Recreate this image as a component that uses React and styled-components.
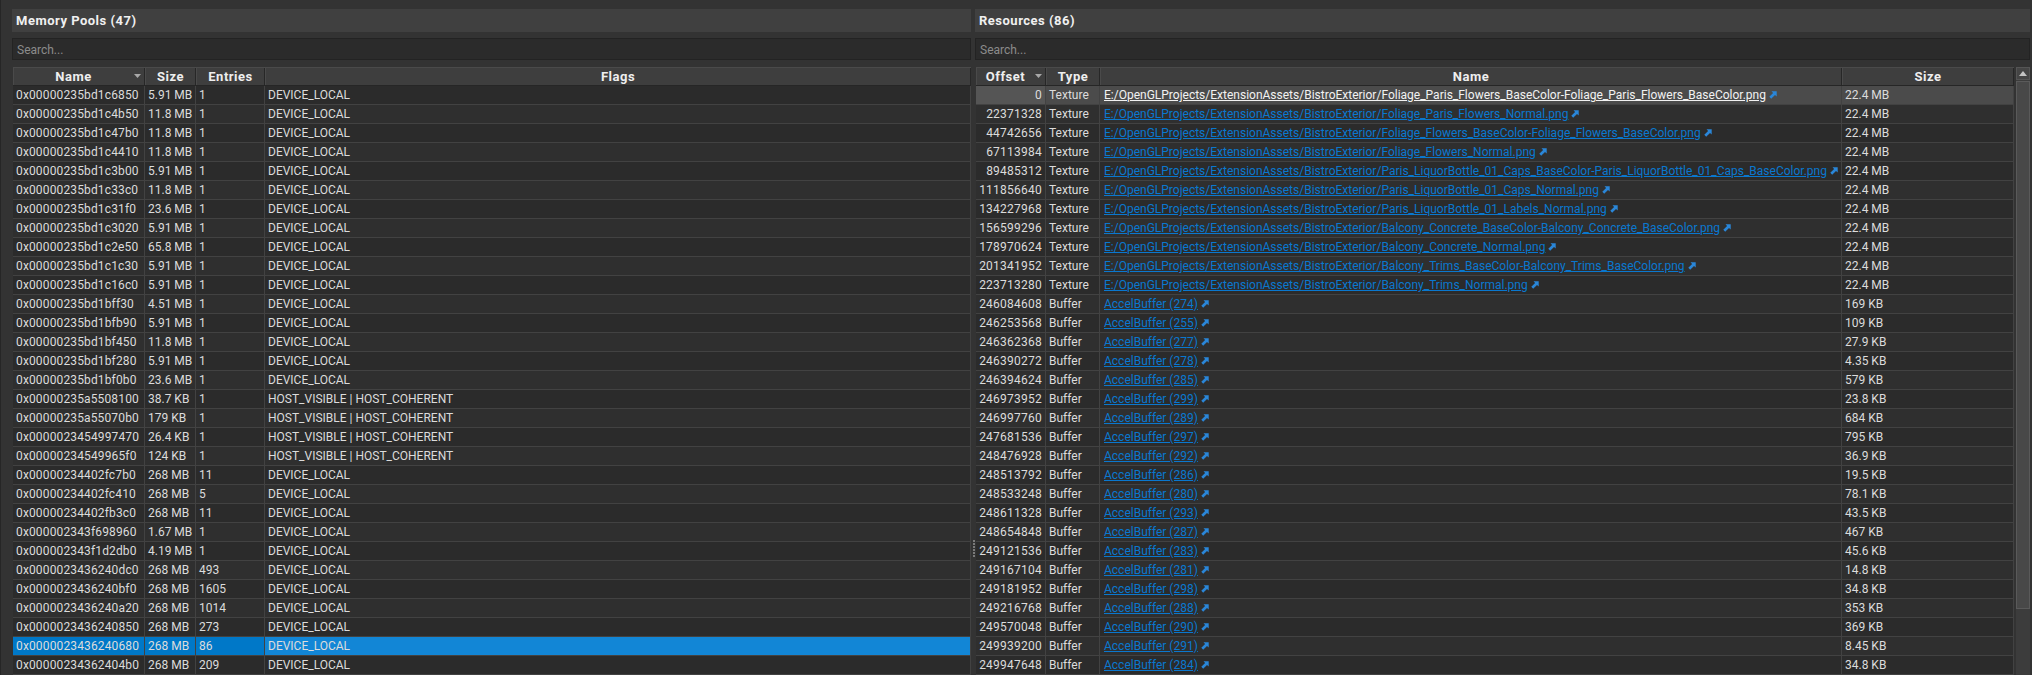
import React from "react";
import styled, { createGlobalStyle } from "styled-components";

const Global = createGlobalStyle`
  html, body { margin: 0; padding: 0; background: #333333; overflow: hidden; }
  #root { height: 675px; overflow: hidden; }
  * { box-sizing: border-box; }
`;

const Page = styled.div`
  height: 675px; overflow: hidden;
  display: grid; grid-template-columns: 959px 1055px; column-gap: 4px;
  padding: 9px 2px 0 11px;
  border-left: 1px solid #262626;
  background: #333333;
  font-family: Roboto, "Liberation Sans", sans-serif;
  font-size: 12px; color: #dcdcdc;
`;
const Panel = styled.section`display: flex; flex-direction: column; min-width: 0; position: relative;`;
const TitleBar = styled.h2`
  margin: 0; height: 23px; padding: 0 0 0 4px; background: #404040;
  font-size: 13px; font-weight: 700; line-height: 24px; color: #f0f0f0; letter-spacing: 0.5px;
`;
const SearchBox = styled.div`
  margin-top: 6px; height: 22px; padding-left: 4px; line-height: 22px;
  background: #2b2b2b; border: 1px solid #232323; color: #8c8c8c; font-size: 12px;
`;
const TableArea = styled.div`display: flex; margin: 7px 0 0 1px; gap: 2px; min-height: 0; flex: 1;`;
const Table = styled.div`flex: 1; min-width: 0; display: flex; flex-direction: column;`;
const Row = styled.div`
  display: grid; grid-template-columns: ${p => p.$cols}; height: 19px; flex: none;
  border-bottom: 1px solid #424242;
`;
const HeadRow = styled(Row)`height: 19px; border-top: 1px solid #4a4a4a; border-bottom: 1px solid #262626;`;
const HeadCell = styled.div`
  position: relative; background: #3e3e3e; border-right: 1px solid #272727; border-left: 1px solid #4a4a4a;
  padding-right: ${p => (p.$sorted ? "11px" : "0")};
  text-align: center; font-weight: 700; font-size: 13px; line-height: 17px; color: #eeeeee; letter-spacing: 0.5px;
`;
const SortMark = styled.svg`position: absolute; top: 6px; right: 3px; width: 7px; height: 4px;`;
const Cell = styled.div`
  padding: 0 3px; line-height: 18px; white-space: nowrap; overflow: hidden;
  border-right: 1px solid #424242;
  letter-spacing: ${p => p.$spacing || "0"};
  text-align: ${p => (p.$right ? "right" : "left")};
  background: ${p => p.$bg};
`;
const LinkCell = styled(Cell)`display: flex; align-items: center; gap: 3px; padding-left: 4px;`;
const FileLink = styled.a`
  color: ${p => (p.$hot ? "#f2f2f2" : "#0a78cf")}; text-decoration: underline; text-underline-offset: 1px;
`;
const ArrowIcon = styled.svg`width: 8px; height: 8px; flex: none; margin-top: -1px;`;
const ScrollBar = styled.div`width: 14px; flex: none; display: flex; flex-direction: column; background: #3c3c3c; gap: 1px;`;
const ScrollButton = styled.div`
  height: 13px; flex: none; background: #454545; border: 1px solid #555; display: flex; align-items: center; justify-content: center;
`;
const Thumb = styled.div`height: 528px; flex: none; background: #484848; border: 1px solid #5a5a5a;`;
const Grip = styled.div`
  position: absolute; left: -2px; top: 531px; width: 2px; height: 17px;
  background: repeating-linear-gradient(#7a7a7a 0 2px, transparent 2px 3px);
`;

const pools = [
  ["0x00000235bd1c6850","5.91 MB","1",0],["0x00000235bd1c4b50","11.8 MB","1",0],["0x00000235bd1c47b0","11.8 MB","1",0],
  ["0x00000235bd1c4410","11.8 MB","1",0],["0x00000235bd1c3b00","5.91 MB","1",0],["0x00000235bd1c33c0","11.8 MB","1",0],
  ["0x00000235bd1c31f0","23.6 MB","1",0],["0x00000235bd1c3020","5.91 MB","1",0],["0x00000235bd1c2e50","65.8 MB","1",0],
  ["0x00000235bd1c1c30","5.91 MB","1",0],["0x00000235bd1c16c0","5.91 MB","1",0],["0x00000235bd1bff30","4.51 MB","1",0],
  ["0x00000235bd1bfb90","5.91 MB","1",0],["0x00000235bd1bf450","11.8 MB","1",0],["0x00000235bd1bf280","5.91 MB","1",0],
  ["0x00000235bd1bf0b0","23.6 MB","1",0],["0x00000235a5508100","38.7 KB","1",1],["0x00000235a55070b0","179 KB","1",1],
  ["0x0000023454997470","26.4 KB","1",1],["0x00000234549965f0","124 KB","1",1],["0x00000234402fc7b0","268 MB","11",0],
  ["0x00000234402fc410","268 MB","5",0],["0x00000234402fb3c0","268 MB","11",0],["0x000002343f698960","1.67 MB","1",0],
  ["0x000002343f1d2db0","4.19 MB","1",0],["0x0000023436240dc0","268 MB","493",0],["0x0000023436240bf0","268 MB","1605",0],
  ["0x0000023436240a20","268 MB","1014",0],["0x0000023436240850","268 MB","273",0],["0x0000023436240680","268 MB","86",0],
  ["0x00000234362404b0","268 MB","209",0],
];
const base = "E:/OpenGLProjects/ExtensionAssets/BistroExterior/";
const resources = [
  ["0","Texture",base+"Foliage_Paris_Flowers_BaseColor-Foliage_Paris_Flowers_BaseColor.png","22.4 MB"],
  ["22371328","Texture",base+"Foliage_Paris_Flowers_Normal.png","22.4 MB"],
  ["44742656","Texture",base+"Foliage_Flowers_BaseColor-Foliage_Flowers_BaseColor.png","22.4 MB"],
  ["67113984","Texture",base+"Foliage_Flowers_Normal.png","22.4 MB"],
  ["89485312","Texture",base+"Paris_LiquorBottle_01_Caps_BaseColor-Paris_LiquorBottle_01_Caps_BaseColor.png","22.4 MB"],
  ["111856640","Texture",base+"Paris_LiquorBottle_01_Caps_Normal.png","22.4 MB"],
  ["134227968","Texture",base+"Paris_LiquorBottle_01_Labels_Normal.png","22.4 MB"],
  ["156599296","Texture",base+"Balcony_Concrete_BaseColor-Balcony_Concrete_BaseColor.png","22.4 MB"],
  ["178970624","Texture",base+"Balcony_Concrete_Normal.png","22.4 MB"],
  ["201341952","Texture",base+"Balcony_Trims_BaseColor-Balcony_Trims_BaseColor.png","22.4 MB"],
  ["223713280","Texture",base+"Balcony_Trims_Normal.png","22.4 MB"],
  ["246084608","Buffer","AccelBuffer (274)","169 KB"],["246253568","Buffer","AccelBuffer (255)","109 KB"],
  ["246362368","Buffer","AccelBuffer (277)","27.9 KB"],["246390272","Buffer","AccelBuffer (278)","4.35 KB"],
  ["246394624","Buffer","AccelBuffer (285)","579 KB"],["246973952","Buffer","AccelBuffer (299)","23.8 KB"],
  ["246997760","Buffer","AccelBuffer (289)","684 KB"],["247681536","Buffer","AccelBuffer (297)","795 KB"],
  ["248476928","Buffer","AccelBuffer (292)","36.9 KB"],["248513792","Buffer","AccelBuffer (286)","19.5 KB"],
  ["248533248","Buffer","AccelBuffer (280)","78.1 KB"],["248611328","Buffer","AccelBuffer (293)","43.5 KB"],
  ["248654848","Buffer","AccelBuffer (287)","467 KB"],["249121536","Buffer","AccelBuffer (283)","45.6 KB"],
  ["249167104","Buffer","AccelBuffer (281)","14.8 KB"],["249181952","Buffer","AccelBuffer (298)","34.8 KB"],
  ["249216768","Buffer","AccelBuffer (288)","353 KB"],["249570048","Buffer","AccelBuffer (290)","369 KB"],
  ["249939200","Buffer","AccelBuffer (291)","8.45 KB"],["249947648","Buffer","AccelBuffer (284)","34.8 KB"],
];

const stripe = i => (i % 2 ? "#2f2f2f" : "#2b2b2b");
const leftCols = "132px 51px 69px 1fr";
const rightCols = "70px 54px 742px 1fr";

const Sort = () => (
  <SortMark viewBox="0 0 7 4"><path d="M0 0h7L3.5 4z" fill="#a8a8a8" /></SortMark>
);
const Arrow = () => (
  <ArrowIcon viewBox="0 0 8 8">
    <path d="M2.5 0.3h5.2v5.2L6 3.9 2.2 7.7 0.3 5.8 4.1 2z" fill="#2a86d8" />
  </ArrowIcon>
);

export default function App() {
  return (
    <Page>
      <Global />
      <Panel>
        <TitleBar>Memory Pools (47)</TitleBar>
        <SearchBox>Search...</SearchBox>
        <TableArea>
          <Table>
            <HeadRow $cols={leftCols}>
              <HeadCell $sorted>Name<Sort /></HeadCell>
              <HeadCell>Size</HeadCell>
              <HeadCell>Entries</HeadCell>
              <HeadCell>Flags</HeadCell>
            </HeadRow>
            {pools.map((p, i) => {
              const sel = i === 29;
              const bg = sel ? "#0078c8" : stripe(i);
              return (
                <Row key={p[0]} $cols={leftCols}>
                  <Cell $bg={bg} $spacing="0.14px">{p[0]}</Cell>
                  <Cell $bg={bg}>{p[1]}</Cell>
                  <Cell $bg={bg}>{p[2]}</Cell>
                  <Cell $bg={sel ? "#1286d6" : bg}>{p[3] ? "HOST_VISIBLE | HOST_COHERENT" : "DEVICE_LOCAL"}</Cell>
                </Row>
              );
            })}
          </Table>
        </TableArea>
      </Panel>
      <Panel>
        <Grip />
        <TitleBar>Resources (86)</TitleBar>
        <SearchBox>Search...</SearchBox>
        <TableArea>
          <Table>
            <HeadRow $cols={rightCols}>
              <HeadCell $sorted>Offset<Sort /></HeadCell>
              <HeadCell>Type</HeadCell>
              <HeadCell>Name</HeadCell>
              <HeadCell>Size</HeadCell>
            </HeadRow>
            {resources.map((r, i) => {
              const hot = i === 0;
              const bg = hot ? "#4b4b4b" : stripe(i);
              return (
                <Row key={r[0]} $cols={rightCols}>
                  <Cell $right $spacing="0.24px" $bg={hot ? "#555555" : bg}>{r[0]}</Cell>
                  <Cell $bg={bg}>{r[1]}</Cell>
                  <LinkCell $bg={bg}><FileLink $hot={hot}>{r[2]}</FileLink><Arrow /></LinkCell>
                  <Cell $bg={bg}>{r[3]}</Cell>
                </Row>
              );
            })}
          </Table>
          <ScrollBar>
            <ScrollButton>
              <svg width="8" height="5" viewBox="0 0 8 5"><path d="M4 0l4 5H0z" fill="#c4c4c4" /></svg>
            </ScrollButton>
            <Thumb />
          </ScrollBar>
        </TableArea>
      </Panel>
    </Page>
  );
}
